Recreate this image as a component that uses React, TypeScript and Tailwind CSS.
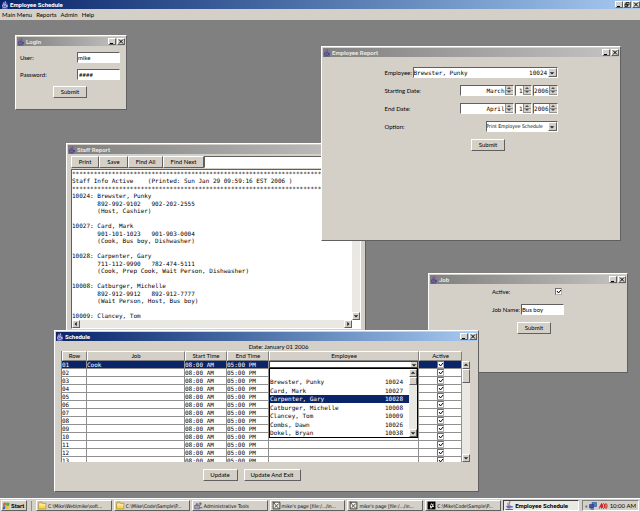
import React, { useState } from 'react';

const raised = 'border border-t-white border-l-white border-r-[#606060] border-b-[#606060] bg-[#d4d0c8]';
const sunken = 'border border-t-[#606060] border-l-[#606060] border-r-white border-b-white bg-white';
const mono = "font-['DejaVu_Sans_Mono',monospace]";
const bold = 'font-[Roboto,sans-serif] font-bold';
const compact = "font-['DejaVu_Sans_Condensed',sans-serif] text-[5px]";

const nb = (s: string) => s.replace(/ /g, '\u00a0');
const employeeLine = (name: string, id: string, width: number) => nb(name.padEnd(width) + id);

const JavaIcon = ({ faded = false }: { faded?: boolean }) => (
  <svg viewBox="0 0 16 16" className="size-[8px] shrink-0">
    <circle cx="8" cy="8" r="6" fill={faded ? '#7c6ea8' : '#5560b0'} opacity="0.7" />
    <path d="M8 0c3 3-2 4 1 8M5 3c2 2-1 3 2 6" stroke={faded ? '#7a4a86' : '#e8b8d0'} strokeWidth="1.8" fill="none" />
    <path d="M3 8h8v3c0 2-8 2-8 0zM11 9h2v2h-2M2 14h11" stroke={faded ? '#3c3c80' : '#c8d0ff'} strokeWidth="1.4" fill="none" />
  </svg>
);

const FolderIcon = () => (
  <svg viewBox="0 0 16 16" className="size-[9px] shrink-0">
    <path d="M1 4l1-2h5l1 2h6v10H1z" fill="#f7d65a" stroke="#9a7a1c" />
    <path d="M2 7h11" stroke="#fff6b8" strokeWidth="2" />
  </svg>
);

const ToolsIcon = () => (
  <svg viewBox="0 0 16 16" className="size-[9px] shrink-0">
    <path d="M1 8h9v6H1z" fill="#a09cb4" stroke="#55506c" />
    <path d="M4 8V5h3v3M11 2v6M9 5h5M10 12h5" stroke="#55506c" strokeWidth="1.5" fill="none" />
  </svg>
);

const PageIcon = () => (
  <svg viewBox="0 0 16 16" className="size-[9px] shrink-0">
    <path d="M2 2h12v12H2z" fill="#f4f0e0" stroke="#222" strokeWidth="1.5" />
    <path d="M4 4l3 4 5 5M5 12l3-4 4-3M1 1l4 3" stroke="#333" strokeWidth="1.5" fill="none" />
  </svg>
);

const EditorIcon = () => (
  <svg viewBox="0 0 16 16" className="size-[9px] shrink-0">
    <path d="M1 1h14v14H1z" fill="#000" />
    <path d="M8 3l1 3 3-2-1 4 2 2-4 1-2 3-2-4 1-3z" fill="#e8e8e8" />
    <path d="M7 7l2 2" stroke="#000" strokeWidth="2" />
  </svg>
);

const CupIcon = () => (
  <svg viewBox="0 0 16 16" className="size-[9px] shrink-0">
    <path d="M8 0c3 3-3 4 0 8M5 3c1 2-1 2 1 5" stroke="#b04468" strokeWidth="1.6" fill="none" />
    <path d="M3 9h8c0 5-8 5-8 0zM11 10h3l-2 2" fill="#6c7cc8" stroke="#3c4a9c" />
    <path d="M1 15h13" stroke="#3c4a9c" strokeWidth="1.6" />
  </svg>
);

const FlagIcon = () => (
  <svg viewBox="0 0 16 16" className="size-[8px] shrink-0">
    <path d="M3 2l5-1-1 6-5 1z" fill="#e0502c" />
    <path d="M9 1l6 1-1 6-6-1z" fill="#58a838" />
    <path d="M2 9l5-1-1 6-5 1z" fill="#3860c8" />
    <path d="M8 8l6 1-1 6-6-1z" fill="#f0c030" />
  </svg>
);

const Arrow = ({ dir }: { dir: 'up' | 'down' | 'left' | 'right' }) => {
  const d = {
    up: 'M1 5l3-3 3 3z',
    down: 'M1 3l3 3 3-3z',
    left: 'M5 1L2 4l3 3z',
    right: 'M3 1l3 3-3 3z',
  }[dir];
  return (
    <svg viewBox="0 0 8 8" className="size-[6px] shrink-0">
      <path d={d} fill="#202020" />
    </svg>
  );
};

const ScrollButton = ({ dir }: { dir: 'up' | 'down' | 'left' | 'right' }) => (
  <button aria-label={`Scroll ${dir}`} className={`${raised} flex size-[8px] shrink-0 items-center justify-center`}>
    <Arrow dir={dir} />
  </button>
);

const CaptionButton = ({ kind }: { kind: 'min' | 'max' | 'close' }) => (
  <button aria-label={kind} className={`${raised} flex h-[7px] w-[8px] items-center justify-center`}>
    <svg viewBox="0 0 12 10" className="h-[5px] w-[6px] shrink-0" stroke="#000" fill="none" strokeWidth="2">
      {kind === 'min' && <path d="M2 9h6" />}
      {kind === 'max' && <path d="M4 1h6v5H4zM2 4h5v5H2z" strokeWidth="1.5" />}
      {kind === 'close' && <path d="M2 1l8 8M10 1l-8 8" />}
    </svg>
  </button>
);

const Button = ({ children, className }: { children: React.ReactNode; className: string }) => (
  <button className={`${raised} h-[12px] leading-[10px] whitespace-nowrap ${className}`}>{children}</button>
);

interface FrameProps {
  title: string;
  active?: boolean;
  className: string;
  children: React.ReactNode;
}

const Frame = ({ title, active = false, className, children }: FrameProps) => (
  <section className={`${raised} absolute flex flex-col p-[1px] ${className}`}>
    <header
      className={`${bold} flex h-[9px] shrink-0 items-center gap-[1px] bg-linear-to-r ${
        active ? 'from-[#0a246a] to-[#a6caf0] text-white' : 'from-[#808080] to-[#c4c4c4] text-[#eae6de]'
      }`}
    >
      <JavaIcon faded={!active} />
      <h2 className="flex-1">{title}</h2>
      <div className="flex gap-[1px]">
        <CaptionButton kind="min" />
        <CaptionButton kind="close" />
      </div>
    </header>
    {children}
  </section>
);

const CheckBox = ({ label }: { label: string }) => (
  <span className="relative mx-auto block size-[7px]">
    <input
      type="checkbox"
      id={label}
      aria-label={label}
      defaultChecked
      className="peer block size-[7px] appearance-none border border-t-[#707070] border-r-[#b4b0a8] border-b-[#b4b0a8] border-l-[#707070] bg-white"
    />
    <svg viewBox="0 0 14 14" className="pointer-events-none absolute inset-0 hidden size-[7px] peer-checked:block">
      <path d="M4 6l3 4 5-6" stroke="#000" strokeWidth="2" fill="none" />
    </svg>
  </span>
);

const DropDown = ({ id, text, className }: { id: string; text: string; className: string }) => (
  <div className={`${sunken} flex h-[11px] ${className}`}>
    <select id={id} className="min-w-0 flex-1 appearance-none bg-white leading-[9px]">
      <option>{text}</option>
    </select>
    <span className={`${raised} pointer-events-none flex w-[9px] items-center justify-center`}>
      <Arrow dir="down" />
    </span>
  </div>
);

const Spinner = ({ id, value, className }: { id: string; value: string; className: string }) => (
  <div className={`${sunken} flex h-[11px] ${className}`}>
    <input id={id} aria-label={id} defaultValue={value} className={`${mono} w-0 min-w-0 flex-1 text-right`} />
    <div className="flex w-[8px] shrink-0 flex-col">
      {(['up', 'down'] as const).map((dir) => (
        <button
          key={dir}
          aria-label={`${id} ${dir}`}
          className="flex flex-1 items-center justify-center overflow-hidden border-b border-l border-[#909090] bg-[#d4d0c8]"
        >
          <svg viewBox="0 0 6 3" className="h-[2px] w-[4px]">
            <path d={dir === 'up' ? 'M0 3l3-3 3 3z' : 'M0 0l3 3 3-3z'} fill="#505050" />
          </svg>
        </button>
      ))}
    </div>
  </div>
);

const LoginWindow = () => (
  <Frame title="Login" className="top-[15px] left-[15px] h-[75px] w-[112px]">
    <form className="flex flex-col gap-[6px] pt-[6px] pr-[5px] pl-[3px]">
      <div className="flex h-[11px] items-center justify-between">
        <label htmlFor="user">User:</label>
        <input id="user" defaultValue="mike" className={`${sunken} h-[11px] w-[43px]`} />
      </div>
      <div className="flex h-[11px] items-center justify-between">
        <label htmlFor="password">Password:</label>
        <input id="password" defaultValue="####" className={`${sunken} h-[11px] w-[43px] pl-[1px]`} />
      </div>
      <Button className="mx-auto w-[34px]">Submit</Button>
    </form>
  </Frame>
);

const ReportWindow = () => (
  <Frame title="Employee Report" className="top-[26px] left-[321px] h-[195px] w-[300px]">
    <form className="mx-auto flex w-[173px] flex-col gap-[7px] pt-[10px]">
      <div className="flex items-center justify-between">
        <label htmlFor="employee">Employee:</label>
        <DropDown id="employee" text={employeeLine('Brewster, Punky', '10024', 32)} className={`${mono} w-[145px]`} />
      </div>
      {[
        ['Starting Date:', 'March'],
        ['End Date:', 'April'],
      ].map(([label, month]) => (
        <div key={label} className="flex items-center gap-[1px]">
          <label htmlFor={`${label} month`} className="flex-1">{label}</label>
          <Spinner id={`${label} month`} value={month} className="w-[54px]" />
          <Spinner id={`${label} day`} value="1" className="w-[17px]" />
          <Spinner id={`${label} year`} value="2006" className="w-[25px]" />
        </div>
      ))}
      <div className="flex items-center justify-between">
        <label htmlFor="option">Option:</label>
        <DropDown id="option" text="Print Employee Schedule" className={`${compact} w-[72px]`} />
      </div>
      <div className="flex justify-center pl-[34px]">
        <Button className="w-[34px]">Submit</Button>
      </div>
    </form>
  </Frame>
);

const staff = [
  { id: '10024', name: 'Brewster, Punky', phones: ['892-992-9102', '902-202-2555'], jobs: 'Host, Cashier' },
  { id: '10027', name: 'Card, Mark', phones: ['901-101-1023', '901-903-0004'], jobs: 'Cook, Bus boy, Dishwasher' },
  { id: '10028', name: 'Carpenter, Gary', phones: ['711-112-9990', '782-474-5111'], jobs: 'Cook, Prep Cook, Wait Person, Dishwasher' },
  { id: '10008', name: 'Catburger, Michelle', phones: ['892-912-9912', '892-912-7777'], jobs: 'Wait Person, Host, Bus boy' },
];

const StaffWindow = () => (
  <Frame title="Staff Report" className="top-[123px] left-[66px] h-[188px] w-[300px]">
    <div className="flex min-h-0 flex-1 flex-col px-[3px] pt-[2px]">
      <div className="flex h-[12px]">
        <Button className="w-[28px]">Print</Button>
        <Button className="w-[29px]">Save</Button>
        <Button className="w-[35px]">Find All</Button>
        <Button className="w-[41px]">Find Next</Button>
        <input aria-label="Find" className={`${sunken} min-w-0 flex-1`} />
      </div>
      <div className={`${sunken} mt-[1px] flex h-[160px] flex-col`}>
        <div className="flex min-h-0 flex-1">
          <div className={`${mono} min-w-0 flex-1 overflow-hidden whitespace-pre`}>
            <div className="grid h-[22px] grid-rows-3">
              <p>{'*'.repeat(77)}</p>
              <p>{'Staff Info Active    (Printed: Sun Jan 29 09:59:16 EST 2006 )'}</p>
              <p>{'*'.repeat(77)}</p>
            </div>
            {staff.map((s) => (
              <div key={s.id} className="grid h-[30px] grid-rows-4">
                <p>{`${s.id}: ${s.name}`}</p>
                <p>{`       ${s.phones.join('   ')}`}</p>
                <p>{`       (${s.jobs})`}</p>
              </div>
            ))}
            <p>10009: Clancey, Tom</p>
          </div>
          <div className="flex w-[8px] flex-col justify-between bg-[#eae8e3]">
            <ScrollButton dir="up" />
            <ScrollButton dir="down" />
          </div>
        </div>
        <div className="mr-[8px] flex h-[8px] justify-between bg-[#eae8e3]">
          <ScrollButton dir="left" />
          <ScrollButton dir="right" />
        </div>
      </div>
    </div>
  </Frame>
);

const JobWindow = () => (
  <Frame title="Job" className="top-[253px] left-[428px] h-[100px] w-[200px]">
    <form className="mx-auto flex w-[72px] flex-col gap-[7px] pt-[2px]">
      <div className="flex h-[11px] items-center justify-between">
        <label htmlFor="Active">Active:</label>
        <div className="pr-[2px]"><CheckBox label="Active" /></div>
      </div>
      <div className="flex items-center justify-between">
        <label htmlFor="job-name" className="whitespace-nowrap">Job Name:</label>
        <input id="job-name" defaultValue="Bus boy" className={`${sunken} h-[11px] w-[43px]`} />
      </div>
      <Button className="ml-[25px] w-[34px]">Submit</Button>
    </form>
  </Frame>
);

const choices = [
  ['', ''],
  ['Brewster, Punky', '10024'],
  ['Card, Mark', '10027'],
  ['Carpenter, Gary', '10028'],
  ['Catburger, Michelle', '10008'],
  ['Clancey, Tom', '10009'],
  ['Combs, Dawn', '10026'],
  ['Dokel, Bryan', '10038'],
];

const EmployeePicker = () => {
  const [picked, setPicked] = useState('10028');
  return (
    <div className="relative">
      <div className="flex h-[7px] border border-[#404040] bg-white">
        <select aria-label="Employee" className="min-w-0 flex-1 appearance-none bg-white text-black" />
        <span className="flex w-[6px] items-center justify-center bg-[#d4d0c8]">
          <Arrow dir="down" />
        </span>
      </div>
      <div className="absolute top-full left-0 z-10 flex h-[70px] w-full border border-black bg-white text-black">
        <ul role="listbox" className="flex min-w-0 flex-1 flex-col">
          {choices.map(([name, id]) => (
            <li
              key={id}
              role="option"
              aria-selected={picked === id}
              onClick={() => setPicked(id)}
              className={`flex flex-1 items-center justify-between pr-[6px] ${picked === id ? 'bg-[#0a246a] text-white' : ''}`}
            >
              <span>{name}</span>
              <span>{id}</span>
            </li>
          ))}
        </ul>
        <div className="flex w-[8px] flex-col bg-[#eae8e3]">
          <ScrollButton dir="up" />
          <div className={`${raised} mb-auto h-[8px]`} />
          <ScrollButton dir="down" />
        </div>
      </div>
    </div>
  );
};

const cell = 'border-r border-b border-[#909090] p-0';

const ScheduleWindow = () => (
  <Frame title="Schedule" active className="top-[310px] left-[54px] h-[162px] w-[425px]">
    <div className="flex flex-col pt-[2px] pr-[7px] pl-[5px]">
      <p className="h-[8px] pl-[26px] text-center">Date: January 01 2006</p>
      <div className="flex h-[111px] border-l border-[#808080]">
        <div className="min-w-0 flex-1 overflow-hidden bg-white">
          <table className="w-full table-fixed border-separate border-spacing-0">
            <colgroup>
              <col className="w-[25px]" />
              <col />
              <col className="w-[42px]" />
              <col className="w-[42px]" />
              <col className="w-[150px]" />
              <col className="w-[43px]" />
            </colgroup>
            <thead>
              <tr>
                {['Row', 'Job', 'Start Time', 'End Time', 'Employee', 'Active'].map((h) => (
                  <th
                    key={h}
                    className="border border-t-white border-r-[#808080] border-b-[#808080] border-l-white bg-[#d4d0c8] p-0 leading-[8px] font-normal"
                  >
                    {h}
                  </th>
                ))}
              </tr>
            </thead>
            <tbody className={`${mono} leading-[7px]`}>
              {Array.from({ length: 13 }, (_, i) => (
                <tr key={i} className={i === 0 ? 'bg-[#0a246a] text-white' : ''}>
                  <td className={cell}>{String(i + 1).padStart(2, '0')}</td>
                  <td className={cell}>{i === 0 ? 'Cook' : ''}</td>
                  <td className={cell}>08:00 AM</td>
                  <td className={cell}>05:00 PM</td>
                  <td className={cell}>{i === 0 && <EmployeePicker />}</td>
                  <td className={cell}>
                    <CheckBox label={`Active ${i + 1}`} />
                  </td>
                </tr>
              ))}
            </tbody>
          </table>
        </div>
        <div className="flex w-[8px] flex-col bg-[#eae8e3]">
          <div className="h-[10px] bg-[#d4d0c8]" />
          <ScrollButton dir="up" />
          <div className={`${raised} mb-auto h-[14px]`} />
          <ScrollButton dir="down" />
        </div>
      </div>
      <div className="flex justify-center gap-[6px] pt-[7px] pr-[28px]">
        <Button className="w-[35px]">Update</Button>
        <Button className="w-[57px]">Update And Exit</Button>
      </div>
    </div>
  </Frame>
);

const tasks = [
  { icon: <FolderIcon />, text: 'C:\\Mike\\Web\\mike\\soft...' },
  { icon: <FolderIcon />, text: 'C:\\Mike\\Code\\Sample\\P...' },
  { icon: <ToolsIcon />, text: 'Administrative Tools' },
  { icon: <PageIcon />, text: "mike's page [file:/.../in..." },
  { icon: <PageIcon />, text: "mike's page [file:/.../in..." },
  { icon: <EditorIcon />, text: 'C:\\Mike\\Code\\Sample\\P...' },
];

const TaskBar = () => (
  <footer className="flex h-[14px] shrink-0 items-center gap-[2px] border-t border-white bg-[#d4d0c8] px-[1px]">
    <button className={`${raised} ${bold} flex h-[11px] w-[26px] items-center gap-[1px]`}>
      <FlagIcon />
      Start
    </button>
    <span className="mr-[2px] ml-[2px] h-[10px] w-[1px] bg-[#909090]" />
    {tasks.map((t, i) => (
      <button key={i} className={`${raised} ${compact} flex h-[11px] min-w-0 flex-1 items-center gap-[1px] pl-[1px] whitespace-nowrap`}>
        {t.icon}
        <span>{t.text}</span>
      </button>
    ))}
    <button
      className={`${bold} flex h-[11px] min-w-0 flex-1 items-center gap-[1px] border border-t-[#404040] border-r-white border-b-white border-l-[#404040] bg-[#eae8e3] pl-[1px] whitespace-nowrap`}
    >
      <CupIcon />
      Employee Schedule
    </button>
    <div className="ml-[1px] flex h-[11px] w-[57px] shrink-0 items-center justify-between border border-t-[#808080] border-r-white border-b-white border-l-[#808080] px-[2px]">
      <span>«</span>
      <svg viewBox="0 0 16 16" className="size-[8px] shrink-0">
        <path d="M6 1h9v8H6z" fill="#4a7cd0" stroke="#1c3a8c" />
        <path d="M1 5h8v7H1z" fill="#3058b8" stroke="#1c2a6c" />
        <path d="M3 14h7" stroke="#444" strokeWidth="2" />
      </svg>
      <svg viewBox="0 0 20 16" className="h-[8px] w-[10px] shrink-0" fill="none" stroke="#d02020" strokeWidth="2">
        <path d="M3 13L7 3v10M3 9h4" />
        <ellipse cx="11" cy="8" rx="2" ry="5" />
        <ellipse cx="16" cy="8" rx="2" ry="5" />
      </svg>
      <span className="whitespace-nowrap">10:00 AM</span>
    </div>
  </footer>
);

export default function App() {
  return (
    <div className="flex h-screen flex-col overflow-hidden bg-[#d4d0c8] font-[Lato,sans-serif] text-[6px] leading-[8px] text-black">
      <header className={`${bold} flex h-[9px] shrink-0 items-center gap-[1px] bg-linear-to-r from-[#0a246a] to-[#a6caf0] pl-[1px] text-white`}>
        <JavaIcon />
        <h1 className="flex-1">Employee Schedule</h1>
        <div className="flex">
          <CaptionButton kind="min" />
          <CaptionButton kind="max" />
          <span className="w-[1px]" />
          <CaptionButton kind="close" />
        </div>
      </header>
      <nav className="flex h-[11px] shrink-0 items-center gap-[4px] pl-[2px]">
        <button>Main Menu</button>
        <button>Reports</button>
        <button>Admin</button>
        <button>Help</button>
      </nav>
      <main className="relative flex-1 overflow-hidden bg-[#808080]">
        <LoginWindow />
        <StaffWindow />
        <ReportWindow />
        <JobWindow />
        <ScheduleWindow />
      </main>
      <TaskBar />
    </div>
  );
}
